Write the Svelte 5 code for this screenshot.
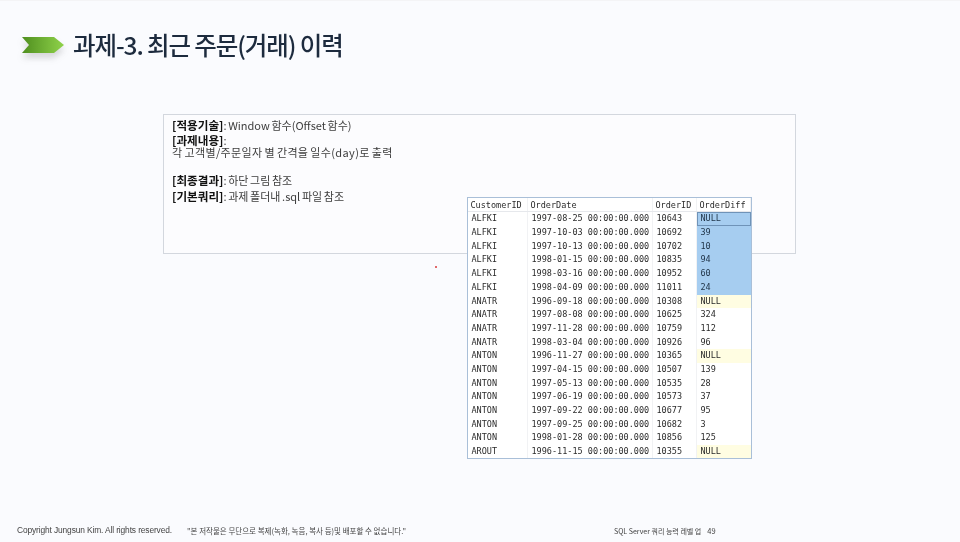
<script>
	const rows = [
		['ALFKI', '1997-08-25 00:00:00.000', '10643', 'NULL'],
		['ALFKI', '1997-10-03 00:00:00.000', '10692', '39'],
		['ALFKI', '1997-10-13 00:00:00.000', '10702', '10'],
		['ALFKI', '1998-01-15 00:00:00.000', '10835', '94'],
		['ALFKI', '1998-03-16 00:00:00.000', '10952', '60'],
		['ALFKI', '1998-04-09 00:00:00.000', '11011', '24'],
		['ANATR', '1996-09-18 00:00:00.000', '10308', 'NULL'],
		['ANATR', '1997-08-08 00:00:00.000', '10625', '324'],
		['ANATR', '1997-11-28 00:00:00.000', '10759', '112'],
		['ANATR', '1998-03-04 00:00:00.000', '10926', '96'],
		['ANTON', '1996-11-27 00:00:00.000', '10365', 'NULL'],
		['ANTON', '1997-04-15 00:00:00.000', '10507', '139'],
		['ANTON', '1997-05-13 00:00:00.000', '10535', '28'],
		['ANTON', '1997-06-19 00:00:00.000', '10573', '37'],
		['ANTON', '1997-09-22 00:00:00.000', '10677', '95'],
		['ANTON', '1997-09-25 00:00:00.000', '10682', '3'],
		['ANTON', '1998-01-28 00:00:00.000', '10856', '125'],
		['AROUT', '1996-11-15 00:00:00.000', '10355', 'NULL']
	];
	const picked = 6;
</script>

<div class="slide">
	<header class="title-row">
		<div class="arrow-wrap">
			<svg width="44" height="18" viewBox="0 0 44 18">
				<defs>
					<linearGradient id="arrow-fill" x1="0" x2="1" y1="0" y2="0">
						<stop offset="0" stop-color="#4f8f1f" />
						<stop offset="1" stop-color="#8fd24a" />
					</linearGradient>
				</defs>
				<path d="M1 1 H33 L43 9 L33 17 H1 L8 9 Z" fill="url(#arrow-fill)" />
			</svg>
		</div>
		<h1>과제-3. 최근 주문(거래) 이력</h1>
	</header>

	<main class="content">
		<section class="brief">
			<p><b>[적용기술]</b>: Window 함수(Offset 함수)</p>
			<p class="gap"><b>[과제내용]</b>:</p>
			<p class="wide">각 고객별/주문일자 별 간격을 일수(day)로 출력</p>
			<p class="para"><b>[최종결과]</b>: 하단 그림 참조</p>
			<p class="next"><b>[기본쿼리]</b>: 과제 폴더내 .sql 파일 참조</p>
		</section>

		<div class="grid">
			<div class="row head">
				<span>CustomerID</span><span>OrderDate</span><span>OrderID</span><span>OrderDiff</span>
			</div>
			{#each rows as r, i}
				<div class="row">
					<span>{r[0]}</span><span>{r[1]}</span><span>{r[2]}</span>
					<span class="diff" class:sel={i < picked} class:first={i === 0} class:null={r[3] === 'NULL' && i >= picked}>{r[3]}</span>
				</div>
			{/each}
		</div>
		<i class="dot"></i>
	</main>

	<footer>
		<span class="copy">Copyright Jungsun Kim. All rights reserved.</span>
		<span class="note">"본 저작물은 무단으로 복제(녹화, 녹음, 복사 등)및 배포할 수 없습니다."</span>
		<span class="page">SQL Server 쿼리 능력 레벨 업<span class="num">49</span></span>
	</footer>
</div>

<style>
	:global(body) {
		margin: 0;
		background: #fafbfe;
	}
	.slide {
		width: 960px;
		height: 542px;
		box-sizing: border-box;
		display: flex;
		flex-direction: column;
		overflow: hidden;
		background: #fafbfe;
		border-top: 1px solid #f4f4f6;
		font-family: 'Noto Sans CJK KR', 'Noto Sans', sans-serif;
		color: #333;
		filter: blur(0.35px);
	}
	.title-row {
		display: flex;
		align-items: center;
		gap: 8px;
		padding: 24px 0 0 21px;
		height: 40px;
	}
	.arrow-wrap {
		position: relative;
		display: flex;
		filter: drop-shadow(0 5px 3px rgba(90, 90, 90, 0.22));
	}
	h1 {
		margin: 0;
		font-size: 24.5px;
		font-weight: 500;
		letter-spacing: -1.1px;
		color: #1d2b3e;
		line-height: 40px;
		white-space: nowrap;
	}
	.content {
		position: relative;
		flex: 1;
		padding: 49px 0 0 163px;
	}
	.brief {
		box-sizing: border-box;
		width: 633px;
		height: 140px;
		background: #fcfcfe;
		border: 1px solid #d3d7de;
		padding: 4px 8px;
		font-size: 11px;
		line-height: 12px;
		word-spacing: -0.8px;
		color: #3c3c3c;
	}
	.brief p {
		margin: 0;
		white-space: nowrap;
	}
	.brief b {
		color: #111;
		font-weight: 700;
		font-size: 11.6px;
	}
	.brief .gap {
		margin-top: 3px;
	}
	.brief .wide {
		letter-spacing: 0.35px;
	}
	.brief .para {
		margin-top: 16px;
	}
	.brief .next {
		margin-top: 4px;
	}
	.grid {
		position: absolute;
		left: 467px;
		top: 132px;
		width: 285px;
		box-sizing: border-box;
		border: 1px solid #a9bfd8;
		background: #fff;
		font-family: 'DejaVu Sans Mono', 'Liberation Mono', monospace;
		font-size: 8.5px;
		color: #2b2b2b;
	}
	.row {
		display: grid;
		grid-template-columns: 60px 125px 44px 54px;
		height: 13.7px;
		line-height: 13.7px;
		white-space: nowrap;
	}
	.row:last-child {
		height: 13px;
	}
	.row span {
		padding-left: 3.5px;
		border-right: 1px solid #f1f2f4;
		box-sizing: border-box;
		overflow: hidden;
	}
	.head {
		height: 14.4px;
		line-height: 14.4px;
		border-bottom: 1px solid #e6e8ec;
		box-sizing: border-box;
	}
	.head span {
		padding-left: 2.5px;
	}
	.row .diff {
		border-right: 0;
	}
	.sel {
		background: #a6cdf0;
		color: #1f3347;
	}
	.first {
		outline: 1px solid #6f93b8;
		outline-offset: -1px;
	}
	.null {
		background: #fffde2;
	}
	.dot {
		position: absolute;
		left: 435px;
		top: 201px;
		width: 2px;
		height: 2px;
		border-radius: 50%;
		background: #d8383a;
	}
	footer {
		display: flex;
		align-items: center;
		height: 16px;
		margin-bottom: 4px;
		padding-left: 17px;
		white-space: nowrap;
		color: #444;
	}
	.copy {
		font-family: 'Liberation Sans', Arial, sans-serif;
		font-size: 8.4px;
		letter-spacing: -0.12px;
		width: 170px;
	}
	.note {
		font-size: 7.5px;
		width: 427px;
	}
	.page {
		font-size: 7px;
	}
	.num {
		margin-left: 6px;
		font-size: 7.5px;
	}
</style>
